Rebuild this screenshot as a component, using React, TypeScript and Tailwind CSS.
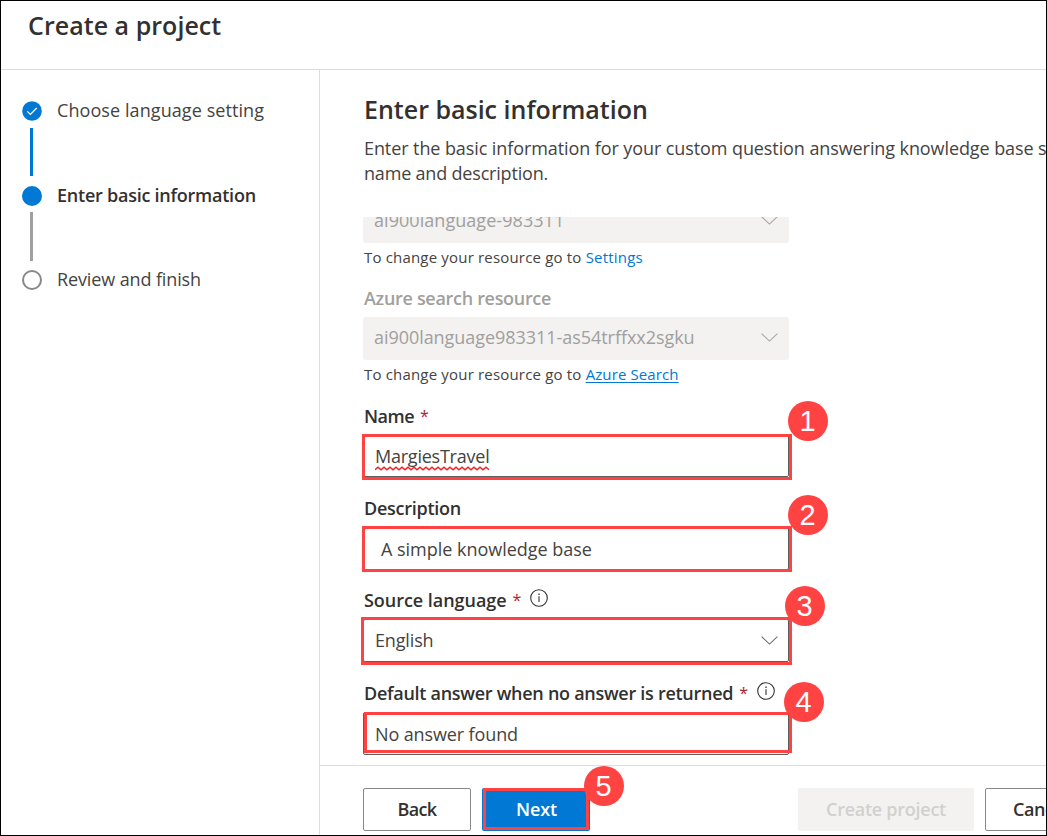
import type { ReactNode } from "react";

function Badge({ n, className }: { n: number; className: string }) {
  return (
    <span
      className={`absolute z-10 flex size-10 items-center justify-center rounded-full bg-[#ff4343] pr-px font-['Liberation_Sans',Arial,sans-serif] text-[29px] leading-none font-normal tracking-normal text-white ${className}`}
    >
      {n}
    </span>
  );
}

function Chevron({ className }: { className: string }) {
  return (
    <svg className={`h-[9px] w-[17px] ${className}`} viewBox="0 0 17 9" fill="none" stroke="currentColor" strokeWidth="1.1">
      <path d="M0.6 0.6 L8.5 8.1 L16.4 0.6" />
    </svg>
  );
}

function Info() {
  return (
    <svg className="mb-[5px] ml-[9px] size-[18px] text-[#323130]" viewBox="0 0 18 18" fill="none" stroke="currentColor">
      <circle cx="9" cy="9" r="8.3" strokeWidth="1.1" />
      <path d="M9 7.3V13" strokeWidth="1.1" />
      <path d="M9 4.6V5.9" strokeWidth="1.3" />
    </svg>
  );
}

function Star() {
  return <span className="ml-1.5 text-[16px] font-normal text-[#a4262c]">*</span>;
}

function Label({ className, children }: { className: string; children: ReactNode }) {
  return (
    <div className={`flex items-end pl-px font-semibold whitespace-nowrap text-[#323130] ${className}`}>{children}</div>
  );
}

function Field({ className = "", children }: { className?: string; children: ReactNode }) {
  return (
    <div className={`relative flex h-[43px] w-[426px] items-center rounded-[2px] border border-[#605e5c] ${className}`}>
      {children}
    </div>
  );
}

function Disabled({ children }: { children: ReactNode }) {
  return (
    <div className="flex h-[43px] w-[426px] shrink-0 items-center justify-between rounded-[3px] bg-[#f3f2f1] pr-[11px] pb-[3px] pl-[11px] text-[#a19f9d]">
      {children}
      <Chevron className="text-[#a8a6a4]" />
    </div>
  );
}

function Steps() {
  return (
    <nav className="w-[319px] shrink-0 border-r border-[#dcdcdc] pt-[30px] pl-[20.5px] whitespace-nowrap">
      <div className="flex h-5 items-center gap-[15.5px]">
        <svg className="mt-px size-5 shrink-0" viewBox="0 0 20 20">
          <circle cx="10" cy="10" r="9.8" fill="#0078d4" />
          <path d="M5.3 10.4 L8.4 13.4 L14.7 7" fill="none" stroke="#fff" strokeWidth="1.2" />
        </svg>
        <span className="tracking-[0.08px]">Choose language setting</span>
      </div>
      <div className="mt-2 ml-[8.5px] h-12 w-[3px] bg-[#0078d4]" />
      <div className="mt-[9px] flex h-5 items-center gap-[15.5px]">
        <span className="mt-px size-5 shrink-0 rounded-full bg-[#0078d4]" />
        <span className="font-semibold tracking-[-0.24px] text-[#323130]">Enter basic information</span>
      </div>
      <div className="mt-[7px] ml-[8.5px] h-[49px] w-[3px] bg-[#a0a0a0]" />
      <div className="mt-2 flex h-5 items-center gap-[15.5px]">
        <span className="mt-px size-5 shrink-0 rounded-full border-2 border-[#8a8886]" />
        <span className="tracking-[-0.12px]">Review and finish</span>
      </div>
    </nav>
  );
}

export default function App() {
  return (
    <div className="flex h-[836px] w-[1047px] flex-col overflow-hidden border border-black bg-white font-['Open_Sans','Noto_Sans',sans-serif] text-[18px] leading-6 text-[#444341]">
      <header className="flex h-[69px] shrink-0 border-b border-[#dcdcdc] pt-[7px] pl-[27px]">
        <h1 className="text-[25px] leading-[34px] font-semibold tracking-[0.04px] text-[#323130]">Create a project</h1>
      </header>
      <div className="flex min-h-0 flex-1">
        <Steps />
        <main className="flex min-w-0 flex-1 flex-col">
          <div className="h-[147px] shrink-0 overflow-hidden pt-[22px] pl-[44px] whitespace-nowrap">
            <h2 className="text-[25px] leading-[34px] font-semibold text-[#323130]">Enter basic information</h2>
            <p className="mt-[10px] leading-[25px]">
              <span className="tracking-[-0.09px]">
                Enter the basic information for your custom question answering knowledge base such as
              </span>
              <br />
              <span className="tracking-[-0.19px]">name and description.</span>
            </p>
          </div>
          <div className="h-[548px] shrink-0 overflow-hidden pl-[43px]">
            <div className="-mt-[17px] flex flex-col">
              <Disabled>
                <span className="mb-px tracking-[0.05px]">ai900language-983311</span>
              </Disabled>
              <p className="h-[30px] pl-px text-[15px] leading-[29px] whitespace-pre">
                <span className="tracking-[0.18px]">To change your resource go to </span>
                <a className="tracking-[0.2px] text-[#0078d4]">Settings</a>
              </p>
              <Label className="h-[44px] pb-[7px] tracking-[-0.31px] !text-[#a19f9d]">Azure search resource</Label>
              <Disabled>
                <span className="tracking-[-0.05px]">ai900language983311-as54trffxx2sgku</span>
              </Disabled>
              <p className="h-[30px] pl-px text-[15px] leading-[29px] whitespace-pre">
                <span className="tracking-[0.18px]">To change your resource go to </span>
                <a className="tracking-[0.11px] text-[#0078d4] underline underline-offset-2">Azure Search</a>
              </p>
              <Label className="h-[44px] pb-[6px]">
                <span className="tracking-[-0.52px]">Name</span>
                <Star />
              </Label>
              <Field className="pl-[11px]">
                <span className="relative tracking-[-0.23px]">
                  MargiesTravel
                  <svg className="absolute top-[22px] left-0 h-[5px] w-[115px]" viewBox="0 0 115 5" fill="none">
                    <path
                      d="M0 3.8 l3 -2.6 l3 2.6 l3 -2.6 l3 2.6 l3 -2.6 l3 2.6 l3 -2.6 l3 2.6 l3 -2.6 l3 2.6 l3 -2.6 l3 2.6 l3 -2.6 l3 2.6 l3 -2.6 l3 2.6 l3 -2.6 l3 2.6 l3 -2.6 l3 2.6 l3 -2.6 l3 2.6 l3 -2.6 l3 2.6 l3 -2.6 l3 2.6 l3 -2.6 l3 2.6 l3 -2.6 l3 2.6 l3 -2.6 l3 2.6 l3 -2.6 l3 2.6 l3 -2.6 l3 2.6 l3 -2.6 l3 2.6"
                      stroke="#f02020"
                      strokeWidth="1.5"
                    />
                  </svg>
                </span>
                <span className="absolute -top-px -left-[2px] h-[46px] w-[430px] border-3 border-[#ff4343]" />
                <Badge n={1} className="-top-[34px] left-[424px]" />
              </Field>
              <Label className="h-[50px] pb-[7px] tracking-[-0.26px]">Description</Label>
              <Field className="pl-4">
                <span className="ml-px tracking-[-0.02px]">A simple knowledge base</span>
                <span className="absolute -top-[2px] -left-[2px] h-[46px] w-[430px] border-3 border-[#ff4343]" />
                <Badge n={2} className="-top-[33px] left-[424px]" />
              </Field>
              <Label className="h-[49px] pb-[7px]">
                <span className="tracking-[-0.04px]">Source language</span>
                <Star />
                <Info />
              </Label>
              <Field className="justify-between pr-[10px] pl-[11px]">
                <span className="mb-[2px] tracking-[-0.15px]">English</span>
                <Chevron className="text-[#706e6c]" />
                <span className="absolute -top-[3px] -left-[3px] h-12 w-[431px] border-3 border-[#ff4343]" />
                <Badge n={3} className="-top-[34px] left-[421px]" />
              </Field>
              <Label className="h-[50px] pb-[7px]">
                <span className="tracking-[-0.28px]">Default answer when no answer is returned</span>
                <Star />
                <Info />
              </Label>
              <Field className="pl-[11px]">
                <span className="tracking-[-0.12px]">No answer found</span>
                <span className="absolute -top-px left-0 h-[41px] w-[428px] border-3 border-[#ff4343]" />
                <Badge n={4} className="-top-[31px] left-[420px]" />
              </Field>
            </div>
          </div>
          <footer className="flex flex-1 items-start border-t border-[#dcdcdc] pt-[22px] pl-[43px] font-semibold whitespace-nowrap text-[#323130]">
            <button className="h-[43px] w-[108px] rounded-[2px] border border-[#8a8886] pb-[2px] tracking-[-0.6px]">
              Back
            </button>
            <button className="relative ml-[11px] h-[43px] w-[108px] rounded-[2px] bg-[#0078d4] pb-[2px] pl-px tracking-[-0.13px] text-white">
              Next
              <span className="absolute top-0 left-px h-[42px] w-[106px] border-3 border-[#ff4343]" />
              <Badge n={5} className="-top-[22px] left-[102px]" />
            </button>
            <button className="ml-[208px] h-[43px] w-[176px] shrink-0 rounded-[2px] bg-[#f3f2f1] pb-[2px] tracking-[-0.26px] text-[#d2d0ce]">
              Create project
            </button>
            <button className="-mr-12 ml-[11px] h-[43px] w-[108px] shrink-0 rounded-[2px] border border-[#8a8886] pb-[2px] pl-[27px] text-left tracking-[-0.43px]">
              Cancel
            </button>
          </footer>
        </main>
      </div>
    </div>
  );
}
